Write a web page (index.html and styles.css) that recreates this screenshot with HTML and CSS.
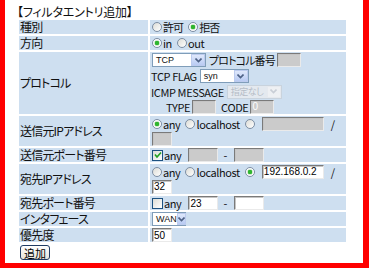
FILE: index.html
```html
<!DOCTYPE html>
<html lang="ja">
<head>
<meta charset="UTF-8">
<title>フィルタエントリ追加</title>
<link rel="stylesheet" href="styles.css">
</head>
<body>
<div class="frame">
  <div class="title">【フィルタエントリ追加】</div>
  <table class="form">
    <tr>
      <td class="lbl">種別</td>
      <td class="val">
        <div class="line">
          <span class="opt"><span class="radio"></span><span class="ja">許可</span></span>
          <span class="opt"><span class="radio on"></span><span class="ja">拒否</span></span>
        </div>
      </td>
    </tr>
    <tr>
      <td class="lbl">方向</td>
      <td class="val">
        <div class="line">
          <span class="opt"><span class="radio on"></span>in</span>
          <span class="opt"><span class="radio"></span>out</span>
        </div>
      </td>
    </tr>
    <!-- protocol block: 4 lines -->
    <tr class="proto">
      <td class="lbl">プロトコル</td>
      <td class="val">
        <div class="line">
          <span class="select w-tcp"><span class="sel-text">TCP</span><span class="arrow"><svg width="7" height="5" viewBox="0 0 7 5"><path d="M0.5 0.5 L3.5 3.5 L6.5 0.5" fill="none" stroke="#4d6185" stroke-width="1.6"/></svg></span></span>
          <span class="txt ja">プロトコル番号</span>
          <input class="box w-s off" type="text" disabled>
        </div>
        <div class="line">
          <span class="txt">TCP FLAG</span>
          <span class="select w-syn"><span class="sel-text">syn</span><span class="arrow"><svg width="7" height="5" viewBox="0 0 7 5"><path d="M0.5 0.5 L3.5 3.5 L6.5 0.5" fill="none" stroke="#4d6185" stroke-width="1.6"/></svg></span></span>
        </div>
        <div class="line">
          <span class="txt">ICMP MESSAGE</span>
          <span class="select w-icmp dis"><span class="sel-text">指定なし</span><span class="arrow"><svg width="7" height="5" viewBox="0 0 7 5"><path d="M0.5 0.5 L3.5 3.5 L6.5 0.5" fill="none" stroke="#c9ced6" stroke-width="1.6"/></svg></span></span>
        </div>
        <div class="line indent">
          <span class="txt">TYPE</span>
          <input class="box w-s off" type="text" disabled>
          <span class="txt sp">CODE</span>
          <input class="box w-s off" type="text" value="0" disabled>
        </div>
      </td>
    </tr>
    <tr class="ip">
      <td class="lbl">送信元IPアドレス</td>
      <td class="val">
        <div class="line">
          <span class="opt"><span class="radio on"></span>any</span>
          <span class="opt"><span class="radio"></span>localhost</span>
          <span class="opt"><span class="radio"></span></span>
          <input class="box w-ip off" type="text" disabled>
          <span class="slash">/</span>
        </div>
        <div class="line">
          <input class="box w-m off" type="text" disabled>
        </div>
      </td>
    </tr>
    <tr>
      <td class="lbl">送信元ポート番号</td>
      <td class="val">
        <div class="line">
          <span class="opt"><span class="check on"><svg width="8" height="8" viewBox="0 0 8 8"><path d="M1 3.5 L3 6 L7 1.5" fill="none" stroke="#21a121" stroke-width="1.6"/></svg></span>any</span>
          <input class="box w-port off" type="text" disabled>
          <span class="dash">-</span>
          <input class="box w-port off" type="text" disabled>
        </div>
      </td>
    </tr>
    <tr class="ip">
      <td class="lbl">宛先IPアドレス</td>
      <td class="val">
        <div class="line">
          <span class="opt"><span class="radio"></span>any</span>
          <span class="opt"><span class="radio"></span>localhost</span>
          <span class="opt"><span class="radio on"></span></span>
          <input class="box w-ip" type="text" value="192.168.0.2">
          <span class="slash">/</span>
        </div>
        <div class="line">
          <input class="box w-m" type="text" value="32">
        </div>
      </td>
    </tr>
    <tr>
      <td class="lbl">宛先ポート番号</td>
      <td class="val">
        <div class="line">
          <span class="opt"><span class="check"></span>any</span>
          <input class="box w-port" type="text" value="23">
          <span class="dash">-</span>
          <input class="box w-port" type="text">
        </div>
      </td>
    </tr>
    <tr>
      <td class="lbl">インタフェース</td>
      <td class="val">
        <div class="line">
          <span class="select w-wan"><span class="sel-text">WAN</span><span class="arrow"><svg width="7" height="5" viewBox="0 0 7 5"><path d="M0.5 0.5 L3.5 3.5 L6.5 0.5" fill="none" stroke="#4d6185" stroke-width="1.6"/></svg></span></span>
        </div>
      </td>
    </tr>
    <tr>
      <td class="lbl">優先度</td>
      <td class="val">
        <div class="line">
          <input class="box w-m" type="text" value="50">
        </div>
      </td>
    </tr>
  </table>
  <button class="btn" type="button">追加</button>
</div>
</body>
</html>
```

FILE: styles.css
```css
/* page */
body {
    margin: 0;
    background-color: #fff;
    color: #111;
    font-family: "Noto Sans CJK JP", sans-serif;
    font-size: 12px;
    font-feature-settings: "palt";
    letter-spacing: -0.4px;
}
/* red frame, top edge is scrolled out of view */
.frame {
    box-sizing: border-box;
    height: 268px;
    border: 5px solid #ff0000;
    border-top: 0;
    border-right-width: 6px;
    padding: 5px 0 0 12px;
}
.title {
    line-height: 13px;
    height: 13px;
    letter-spacing: -0.2px;
}
/* form table */
.form {
    border-collapse: separate;
    border-spacing: 2px;
    width: 331px;
}
.form td {
    background-color: #cedff0;
    padding: 0 1px;
    line-height: 14px;
    vertical-align: middle;
}
.lbl {
    width: 127px;
    font-size: 12px;
    letter-spacing: -0.8px;
}
.val {
    font-size: 11px;
}
.ja {
    letter-spacing: -0.9px;
}
.line {
    display: flex;
    align-items: center;
    height: 14px;
    white-space: nowrap;
}
.proto .line {
    height: 15px;
}
.proto .line:nth-child(-n+2) {
    height: 16px;
}
.ip .line {
    height: 15px;
}
.indent {
    padding-left: 15px;
}
.txt {
    margin-right: 2px;
}
.sp {
    margin-left: 3px;
}
/* radio / checkbox */
.opt {
    display: inline-flex;
    align-items: center;
    margin-right: 4px;
}
.radio {
    box-sizing: border-box;
    width: 10px;
    height: 10px;
    margin: 0 1px 0 1px;
    border: 1px solid #7d8ea3;
    border-radius: 50%;
    background: linear-gradient(135deg, #dcdcd6, #fff);
}
.radio.on {
    background: radial-gradient(circle, #2fb52f 0 2px, #cfe8cf 2.5px, #fff 3.5px);
}
.check {
    box-sizing: border-box;
    display: inline-flex;
    align-items: center;
    justify-content: center;
    width: 11px;
    height: 11px;
    margin: 0 1px;
    border: 1px solid #1c5180;
    background: linear-gradient(135deg, #dcdcd6, #fff);
}
/* text boxes */
.box {
    box-sizing: border-box;
    height: 14px;
    margin: 0 2px 0 0;
    padding: 0 1px;
    border: 1px solid;
    border-color: #7a7a7a #eaeaea #eaeaea #7a7a7a;
    box-shadow: inset 1px 1px 0 #c4c4c4;
    background-color: #fff;
    color: #000;
    font-family: "Liberation Sans", sans-serif;
    font-size: 10px;
    line-height: 12px;
    letter-spacing: 0;
}
.box.off {
    background-color: #cbcbcb;
    color: #fff;
}
.w-s { width: 24px; }
.w-m { width: 20px; margin-left: 1px; }
.w-ip { width: 62px; margin-left: 2px; }
.w-port { width: 30px; margin-left: 3px; }
.slash {
    margin-left: 5px;
}
.dash {
    margin: 0 4px 0 3px;
}
/* drop-down look */
.select {
    box-sizing: border-box;
    display: inline-flex;
    height: 14px;
    margin: 0 3px 0 1px;
    border: 1px solid #7f9db9;
    background-color: #fff;
    font-family: "Liberation Sans", sans-serif;
    font-size: 9px;
    letter-spacing: 0;
}
.sel-text {
    flex: 1;
    padding-left: 3px;
    line-height: 12px;
}
.arrow {
    display: flex;
    align-items: center;
    justify-content: center;
    width: 12px;
    border: 1px solid #bccbee;
    background: linear-gradient(#dfe8fb, #b9cbf3);
}
.w-tcp { width: 54px; }
.w-syn { width: 49px; margin-left: 1px; }
.w-icmp { width: 55px; margin-left: 1px; }
.w-wan { width: 34px; }
.select.dis {
    border-color: #c9d3dd;
    background-color: #e4e9ef;
    color: #b5bcc6;
    font-family: "Noto Sans CJK JP", sans-serif;
    letter-spacing: -0.5px;
}
.select.dis .arrow {
    border-color: #e6e9ee;
    background: #eef0f3;
}
/* submit button */
.btn {
    display: block;
    height: 15px;
    margin: 1px 0 0 3px;
    padding: 0 3px;
    border: 1px solid #1f3b63;
    border-radius: 3px;
    background: linear-gradient(#ffffff, #e6e4da);
    font-family: "Noto Sans CJK JP", sans-serif;
    font-size: 11px;
    line-height: 12px;
}
```
